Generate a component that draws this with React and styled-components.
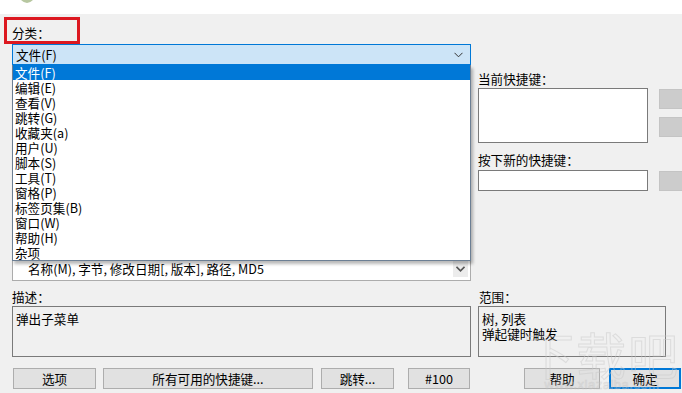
import React from "react";
import styled, { createGlobalStyle } from "styled-components";

const GlobalStyle = createGlobalStyle`
  html, body {
    margin: 0;
    padding: 0;
    background: #f0f0f0;
    overflow: hidden;
  }
  body {
    font-family: "Noto Sans CJK SC", "Noto Sans", sans-serif;
    font-size: 12.6px;
    color: #000;
  }
`;

const Window = styled.div`
  position: relative;
  width: 682px;
  height: 393px;
  overflow: hidden;
`;

const TopStrip = styled.div`
  height: 14px;
  background: #fff;
  display: flex;
  align-items: flex-start;
  padding-left: 20px;
`;

const Body = styled.div`
  display: grid;
  grid-template-columns: 459px 204px;
  column-gap: 7px;
  padding-left: 12px;
`;

const Column = styled.div`
  display: flex;
  flex-direction: column;
  height: ${(p) => p.$height || "auto"};
`;

const Marked = styled.div`
  box-sizing: border-box;
  width: 76px;
  height: 27px;
  margin: 3px 0 0 -8px;
  border: 3px solid #dc1820;
  padding: 6px 0 0 5px;
  line-height: 14px;
`;

const ComboWrap = styled.div`
  position: relative;
  z-index: 2;
`;

const Combo = styled.div`
  box-sizing: border-box;
  height: ${(p) => (p.$tall ? "25px" : "21px")};
  display: flex;
  align-items: center;
  justify-content: space-between;
  padding: 0 4px 0 ${(p) => (p.$indent ? "15px" : "3px")};
  background: ${(p) => (p.$open ? "#cce4f7" : "#fff")};
  border: 1px solid ${(p) => (p.$open ? "#0078d7" : "#acacac")};
  line-height: 14px;
  white-space: nowrap;
`;

const DropButton = styled.span`
  display: flex;
  align-items: center;
  justify-content: center;
  width: 15px;
  height: 17px;
  background: ${(p) => (p.$boxed ? "#ececec" : "transparent")};
  margin-right: ${(p) => (p.$boxed ? "-2px" : "0")};
`;

const DropList = styled.ul`
  position: absolute;
  top: 100%;
  left: 0;
  box-sizing: border-box;
  width: 459px;
  margin: 0;
  padding: 0;
  list-style: none;
  background: #fff;
  border: 1px solid #6c7f94;
  border-top: none;
  box-shadow: 2px 3px 3px rgba(0, 0, 0, 0.28);
`;

const DropItem = styled.li`
  height: 15px;
  line-height: 15px;
  padding-left: 2px;
  background: ${(p) => (p.$selected ? "#0078d7" : "transparent")};
  color: ${(p) => (p.$selected ? "#fff" : "#000")};
  white-space: nowrap;
`;

const Filler = styled.div`
  flex: 1;
`;

const Label = styled.div`
  line-height: 15px;
  height: 15px;
  margin-top: ${(p) => p.$top || "0"};
  margin-bottom: ${(p) => p.$gap || "2px"};
  padding-left: ${(p) => p.$indent || "0"};
  white-space: nowrap;
`;

const KeyRow = styled.div`
  display: flex;
  gap: 11px;
  align-items: flex-start;
  width: 240px;
`;

const KeyBox = styled.div`
  box-sizing: border-box;
  flex-shrink: 0;
  width: 170px;
  height: ${(p) => p.$h};
  background: #fff;
  border: 1px solid #7a7a7a;
`;

const SideButtons = styled.div`
  display: flex;
  flex-direction: column;
  gap: 8px;
  padding-top: 1px;
`;

const SideButton = styled.div`
  box-sizing: border-box;
  width: 30px;
  height: 20px;
  background: #cccccc;
  border: 1px solid #c4c4c4;
`;

const InfoBox = styled.div`
  box-sizing: border-box;
  width: ${(p) => p.$w};
  height: 51px;
  padding: 4px 3px;
  border: 1px solid #7a7a7a;
  background: #f0f0f0;
  line-height: 15px;
`;

const InfoCell = styled.div`
  padding-top: ${(p) => p.$top || "8px"};
`;

const ButtonRow = styled.div`
  display: flex;
  align-items: center;
  margin-top: 11px;
  padding-left: ${(p) => p.$indent || "0"};
`;

const Button = styled.div`
  box-sizing: border-box;
  width: ${(p) => p.$w};
  height: 21px;
  margin-left: ${(p) => p.$ml || "0"};
  display: flex;
  align-items: center;
  justify-content: center;
  background: #e1e1e1;
  border: ${(p) => (p.$default ? "2px solid #0078d7" : "1px solid #adadad")};
  line-height: 14px;
  white-space: nowrap;
`;

const Watermark = styled.div`
  position: absolute;
  right: 2px;
  bottom: 2px;
  display: flex;
  flex-direction: column;
  align-items: center;
  pointer-events: none;
  opacity: 0.5;
`;

const WatermarkTitle = styled.span`
  font-family: "Noto Sans CJK SC", sans-serif;
  font-size: 50px;
  line-height: 50px;
  color: transparent;
  -webkit-text-stroke: 1px #c9c9c9;
  letter-spacing: 2px;
`;

const WatermarkUrl = styled.span`
  font-family: "Liberation Sans", sans-serif;
  font-size: 13px;
  line-height: 13px;
  color: transparent;
  -webkit-text-stroke: 0.6px #c4c4c4;
  letter-spacing: 0.5px;
`;

const Chevron = ({ bold }) => (
  <svg width="9" height="6" viewBox="0 0 9 6">
    <path
      d="M0.5 0.8 L4.5 4.8 L8.5 0.8"
      fill="none"
      stroke={bold ? "#555" : "#333"}
      strokeWidth={bold ? 1.6 : 1}
    />
  </svg>
);

const categories = [
  "文件(F)",
  "编辑(E)",
  "查看(V)",
  "跳转(G)",
  "收藏夹(a)",
  "用户(U)",
  "脚本(S)",
  "工具(T)",
  "窗格(P)",
  "标签页集(B)",
  "窗口(W)",
  "帮助(H)",
  "杂项",
];

export default function App() {
  return (
    <Window>
      <GlobalStyle />
      <TopStrip>
        <svg width="14" height="4" viewBox="0 0 14 4">
          <path d="M1 0 Q7 6 13 0 Z" fill="#b7c7a0" />
        </svg>
      </TopStrip>
      <Body>
        <Column $height="267px">
          <Marked>分类：</Marked>
          <ComboWrap>
            <Combo $open>
              <span>文件(F)</span>
              <DropButton>
                <Chevron />
              </DropButton>
            </Combo>
            <DropList>
              {categories.map((c, i) => (
                <DropItem key={c} $selected={i === 0}>
                  {c}
                </DropItem>
              ))}
            </DropList>
          </ComboWrap>
          <Filler />
          <Combo $tall $indent>
            <span>名称(M), 字节, 修改日期[, 版本], 路径, MD5</span>
            <DropButton $boxed>
              <Chevron bold />
            </DropButton>
          </Combo>
        </Column>

        <Column $height="267px">
          <InfoCell $top="57px">
            <Label>当前快捷键：</Label>
            <KeyRow>
              <KeyBox $h="55px" />
              <SideButtons>
                <SideButton />
                <SideButton />
              </SideButtons>
            </KeyRow>
            <Label $top="9px" $gap="3px">
              按下新的快捷键：
            </Label>
            <KeyRow>
              <KeyBox $h="21px" />
              <SideButtons>
                <SideButton />
              </SideButtons>
            </KeyRow>
          </InfoCell>
        </Column>

        <InfoCell>
          <Label>描述：</Label>
          <InfoBox $w="459px">弹出子菜单</InfoBox>
        </InfoCell>
        <InfoCell>
          <Label $indent="1px">范围：</Label>
          <InfoBox $w="188px">
            树, 列表
            <br />
            弹起键时触发
          </InfoBox>
        </InfoCell>

        <ButtonRow $indent="1px">
          <Button $w="83px">选项</Button>
          <Button $w="210px" $ml="7px">
            所有可用的快捷键...
          </Button>
          <Button $w="73px" $ml="8px">
            跳转...
          </Button>
          <Button $w="62px" $ml="14px">
            #100
          </Button>
        </ButtonRow>
        <ButtonRow $indent="46px">
          <Button $w="76px">帮助</Button>
          <Button $w="72px" $ml="9px" $default>
            确定
          </Button>
        </ButtonRow>
      </Body>
      <Watermark>
        <WatermarkTitle>下载吧</WatermarkTitle>
        <WatermarkUrl>www.xiazaiba.com</WatermarkUrl>
      </Watermark>
    </Window>
  );
}
